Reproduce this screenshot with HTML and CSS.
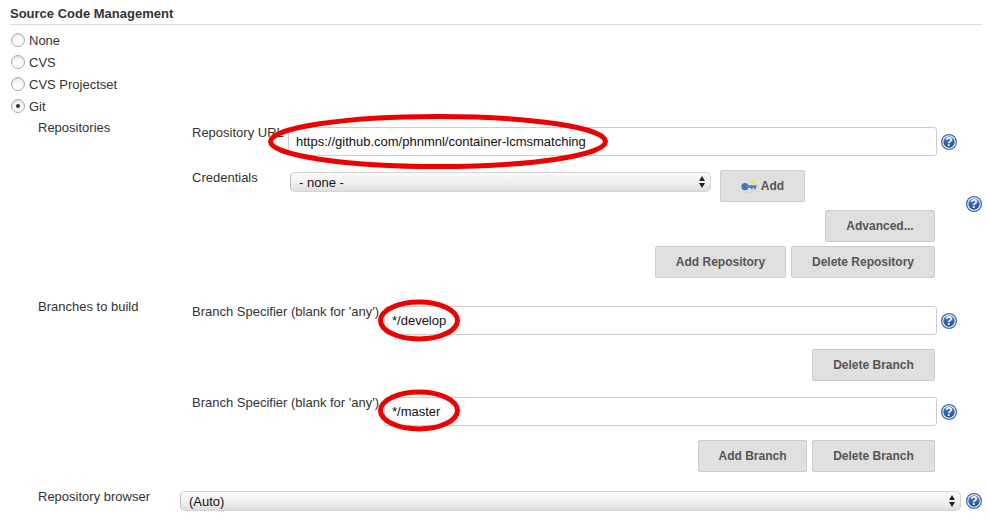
FILE: index.html
```html
<!DOCTYPE html>
<html lang="en">
<head>
<meta charset="UTF-8" />
<meta name="viewport" content="width=device-width, initial-scale=1" />
<title>Source Code Management</title>
<link rel="stylesheet" href="styles.css">
</head>
<body>

<h2 class="section-title">Source Code Management</h2>

<!-- SCM options -->
<div class="scm-options">
  <label class="scm-option"><input type="radio" name="scm" /> None</label>
  <label class="scm-option"><input type="radio" name="scm" /> CVS</label>
  <label class="scm-option"><input type="radio" name="scm" /> CVS Projectset</label>
  <label class="scm-option"><input type="radio" name="scm" checked /> Git</label>
</div>

<div class="git-config">

  <!-- Repositories -->
  <div class="config-section repos">
    <div class="section-label">Repositories</div>
    <div class="section-body repo-body">
      <div class="repo-fields">
        <div class="field-row">
          <label class="field-label url-label">Repository URL</label>
          <input class="text-input" type="text" value="https://github.com/phnmnl/container-lcmsmatching" />
          <svg class="help-icon" viewBox="0 0 16 16"><use href="#help" /></svg>
        </div>
        <div class="field-row cred-row">
          <label class="field-label cred-label">Credentials</label>
          <div class="select-box cred-select">
            <select><option>- none -</option></select>
            <span class="select-arrows"></span>
          </div>
          <button class="btn add-cred">
            <svg class="key-icon" viewBox="0 0 16 14">
              <ellipse cx="8" cy="12.8" rx="6.5" ry="1" fill="#d4d4d4" />
              <circle cx="4" cy="7.6" r="3.6" fill="#3f76b8" />
              <rect x="5" y="6.2" width="10.5" height="2.8" fill="#4f86c6" />
              <rect x="10" y="8.6" width="1.5" height="1.8" fill="#3f76b8" />
              <rect x="13" y="8.6" width="1.5" height="1.8" fill="#3f76b8" />
              <circle cx="11.5" cy="3" r="2.3" fill="#f5e94c" />
            </svg>
            Add
          </button>
        </div>
        <div class="button-row advanced-row">
          <button class="btn advanced-btn">Advanced...</button>
        </div>
        <div class="button-row">
          <button class="btn add-repo">Add Repository</button>
          <button class="btn del-repo">Delete Repository</button>
        </div>
      </div>
      <svg class="help-icon repo-help" viewBox="0 0 16 16"><use href="#help" /></svg>
    </div>
  </div>

  <!-- Branches -->
  <div class="config-section branches">
    <div class="section-label">Branches to build</div>
    <div class="section-body branch-body">
      <div class="field-row">
        <label class="field-label branch-label">Branch Specifier (blank for 'any')</label>
        <input class="text-input" type="text" value="*/develop" />
        <svg class="help-icon" viewBox="0 0 16 16"><use href="#help" /></svg>
      </div>
      <div class="button-row branch-buttons">
        <button class="btn del-branch">Delete Branch</button>
      </div>
      <div class="field-row">
        <label class="field-label branch-label">Branch Specifier (blank for 'any')</label>
        <input class="text-input" type="text" value="*/master" />
        <svg class="help-icon" viewBox="0 0 16 16"><use href="#help" /></svg>
      </div>
      <div class="button-row">
        <button class="btn add-branch">Add Branch</button>
        <button class="btn del-branch">Delete Branch</button>
      </div>
    </div>
  </div>

  <!-- Repository browser -->
  <div class="browser-row">
    <div class="section-label browser-label">Repository browser</div>
    <div class="select-box browser-select">
      <select><option>(Auto)</option></select>
      <span class="select-arrows"></span>
    </div>
    <svg class="help-icon browser-help" viewBox="0 0 16 16"><use href="#help" /></svg>
  </div>

</div>

<!-- Red circles drawn over the screenshot -->
<svg class="markup" viewBox="0 0 988 525">
  <ellipse cx="438" cy="141.5" rx="167.5" ry="25" />
  <ellipse cx="419" cy="320.5" rx="38.5" ry="18.5" />
  <ellipse cx="419" cy="410.5" rx="38.5" ry="18.5" />
</svg>

<!-- Shared help icon -->
<svg class="icon-defs" width="0" height="0">
  <defs>
    <linearGradient id="helpBlue" x1="0" y1="0" x2="0" y2="1">
      <stop offset="0" stop-color="#4a7fc4" />
      <stop offset="1" stop-color="#1f4f96" />
    </linearGradient>
    <g id="help">
      <circle cx="8" cy="8" r="8" fill="#3f6fb0" />
      <circle cx="8" cy="8" r="6.7" fill="#fff" />
      <circle cx="8" cy="8" r="5.7" fill="url(#helpBlue)" />
      <text x="8" y="12.2" text-anchor="middle" font-size="12" font-weight="bold" font-family="Liberation Sans, sans-serif" fill="#fff">?</text>
    </g>
  </defs>
</svg>

</body>
</html>
```

FILE: styles.css
```css
body {
  margin: 0;
  position: relative;
  font-family: "Liberation Sans", Arial, sans-serif;
  font-size: 13px;
  color: #333;
  background: #fff;
  overflow: hidden;
}

/* Header */
.section-title {
  margin: 0 6px 4px 10px;
  padding: 6px 0 3px;
  font-size: 13px;
  line-height: 15px;
  font-weight: bold;
  border-bottom: 1px solid #ddd;
}

/* Radio list */
.scm-option {
  display: flex;
  align-items: center;
  height: 22px;
  padding-left: 11px;
  color: #333;
}

.scm-option input {
  appearance: none;
  width: 14px;
  height: 14px;
  margin: 0 4px 0 0;
  border: 1px solid #aaa;
  border-radius: 50%;
  background: linear-gradient(#f2f2f2, #fff);
  box-shadow: inset 0 1px 1px rgba(0,0,0,0.1);
  display: inline-flex;
  align-items: center;
  justify-content: center;
}

.scm-option input:checked::before {
  content: "";
  width: 4px;
  height: 4px;
  border-radius: 50%;
  background: #333;
}

/* Main config layout */
.git-config {
  padding: 1px 0 0 38px;
}

.config-section {
  display: flex;
  margin-bottom: 13px;
}

.section-label {
  width: 154px;
  flex: none;
  padding-top: 1px;
  line-height: 18px;
}

.section-body {
  padding-top: 6px;
}

.repo-body {
  display: flex;
  align-items: center;
}

.repo-fields {
  width: 774px;
  padding-bottom: 6px;
}

.branch-body {
  width: 774px;
}

/* Field rows */
.field-row {
  display: flex;
  align-items: flex-start;
  height: 46px;
  line-height: 15px;
}

.cred-row {
  height: 40px;
}

.field-label {
  flex: none;
  white-space: nowrap;
  padding-top: 1px;
}

.url-label { width: 96px; }
.cred-label { width: 98px; padding-top: 0; }
.branch-label { width: 192px; }

.text-input {
  box-sizing: border-box;
  flex: none;
  height: 29px;
  margin-top: 3px;
  padding: 0 7px;
  border: 1px solid #ccc;
  border-radius: 3px;
  font-family: inherit;
  font-size: 13px;
  color: #111;
  outline: none;
}

.url-label + .text-input { width: 649px; }
.branch-label + .text-input { width: 553px; }

.help-icon {
  width: 16px;
  height: 16px;
  flex: none;
}

.field-row .help-icon {
  margin: 10px 0 0 4px;
}

.icon-defs {
  position: absolute;
}

/* Selects */
.select-box {
  position: relative;
  flex: none;
  height: 20px;
}

.select-box select {
  appearance: none;
  box-sizing: border-box;
  width: 100%;
  height: 20px;
  padding: 0 8px;
  border: 1px solid #d4d4d4;
  border-left-color: #bbb;
  border-radius: 5px;
  background: linear-gradient(#fafafa, #f2f2f2 50%, #dedede);
  font-family: inherit;
  font-size: 13px;
  color: #111;
  outline: none;
}

.select-arrows {
  position: absolute;
  right: 6px;
  top: 4px;
  width: 6px;
  height: 12px;
}

.select-arrows::before,
.select-arrows::after {
  content: "";
  position: absolute;
  left: 0;
  border-left: 3px solid transparent;
  border-right: 3px solid transparent;
}

.select-arrows::before {
  top: 0;
  border-bottom: 5px solid #222;
}

.select-arrows::after {
  bottom: 0;
  border-top: 5px solid #222;
}

.cred-select {
  width: 421px;
  margin-top: 2px;
}

.browser-select {
  width: 781px;
  margin-top: 4px;
}

/* Buttons */
.btn {
  box-sizing: border-box;
  height: 32px;
  padding: 0;
  border: 1px solid #ccc;
  border-radius: 2px;
  background: #e0e0e0;
  font-family: inherit;
  font-size: 12px;
  font-weight: bold;
  color: #555;
}

.add-cred {
  display: flex;
  align-items: center;
  justify-content: center;
  gap: 4px;
  width: 85px;
  margin-left: 9px;
}

.key-icon {
  width: 16px;
  height: 14px;
}

.button-row {
  display: flex;
  justify-content: flex-end;
  gap: 5px;
  padding-right: 31px;
}

.advanced-row {
  margin-bottom: 4px;
}

.advanced-btn { width: 110px; }
.add-repo { width: 131px; }
.del-repo { width: 144px; }
.add-branch { width: 109px; }
.del-branch { width: 123px; }

.branch-buttons {
  margin-bottom: 13px;
}

/* Repository browser row */
.browser-row {
  display: flex;
  align-items: flex-start;
  margin-top: 15px;
}

.browser-label {
  width: 142px;
}

.browser-help {
  margin: 6px 0 0 5px;
}

/* Red markup */
.markup {
  position: absolute;
  left: 0;
  top: 0;
  width: 988px;
  height: 525px;
  pointer-events: none;
}

.markup ellipse {
  fill: none;
  stroke: #ec0000;
  stroke-width: 5;
}
```
